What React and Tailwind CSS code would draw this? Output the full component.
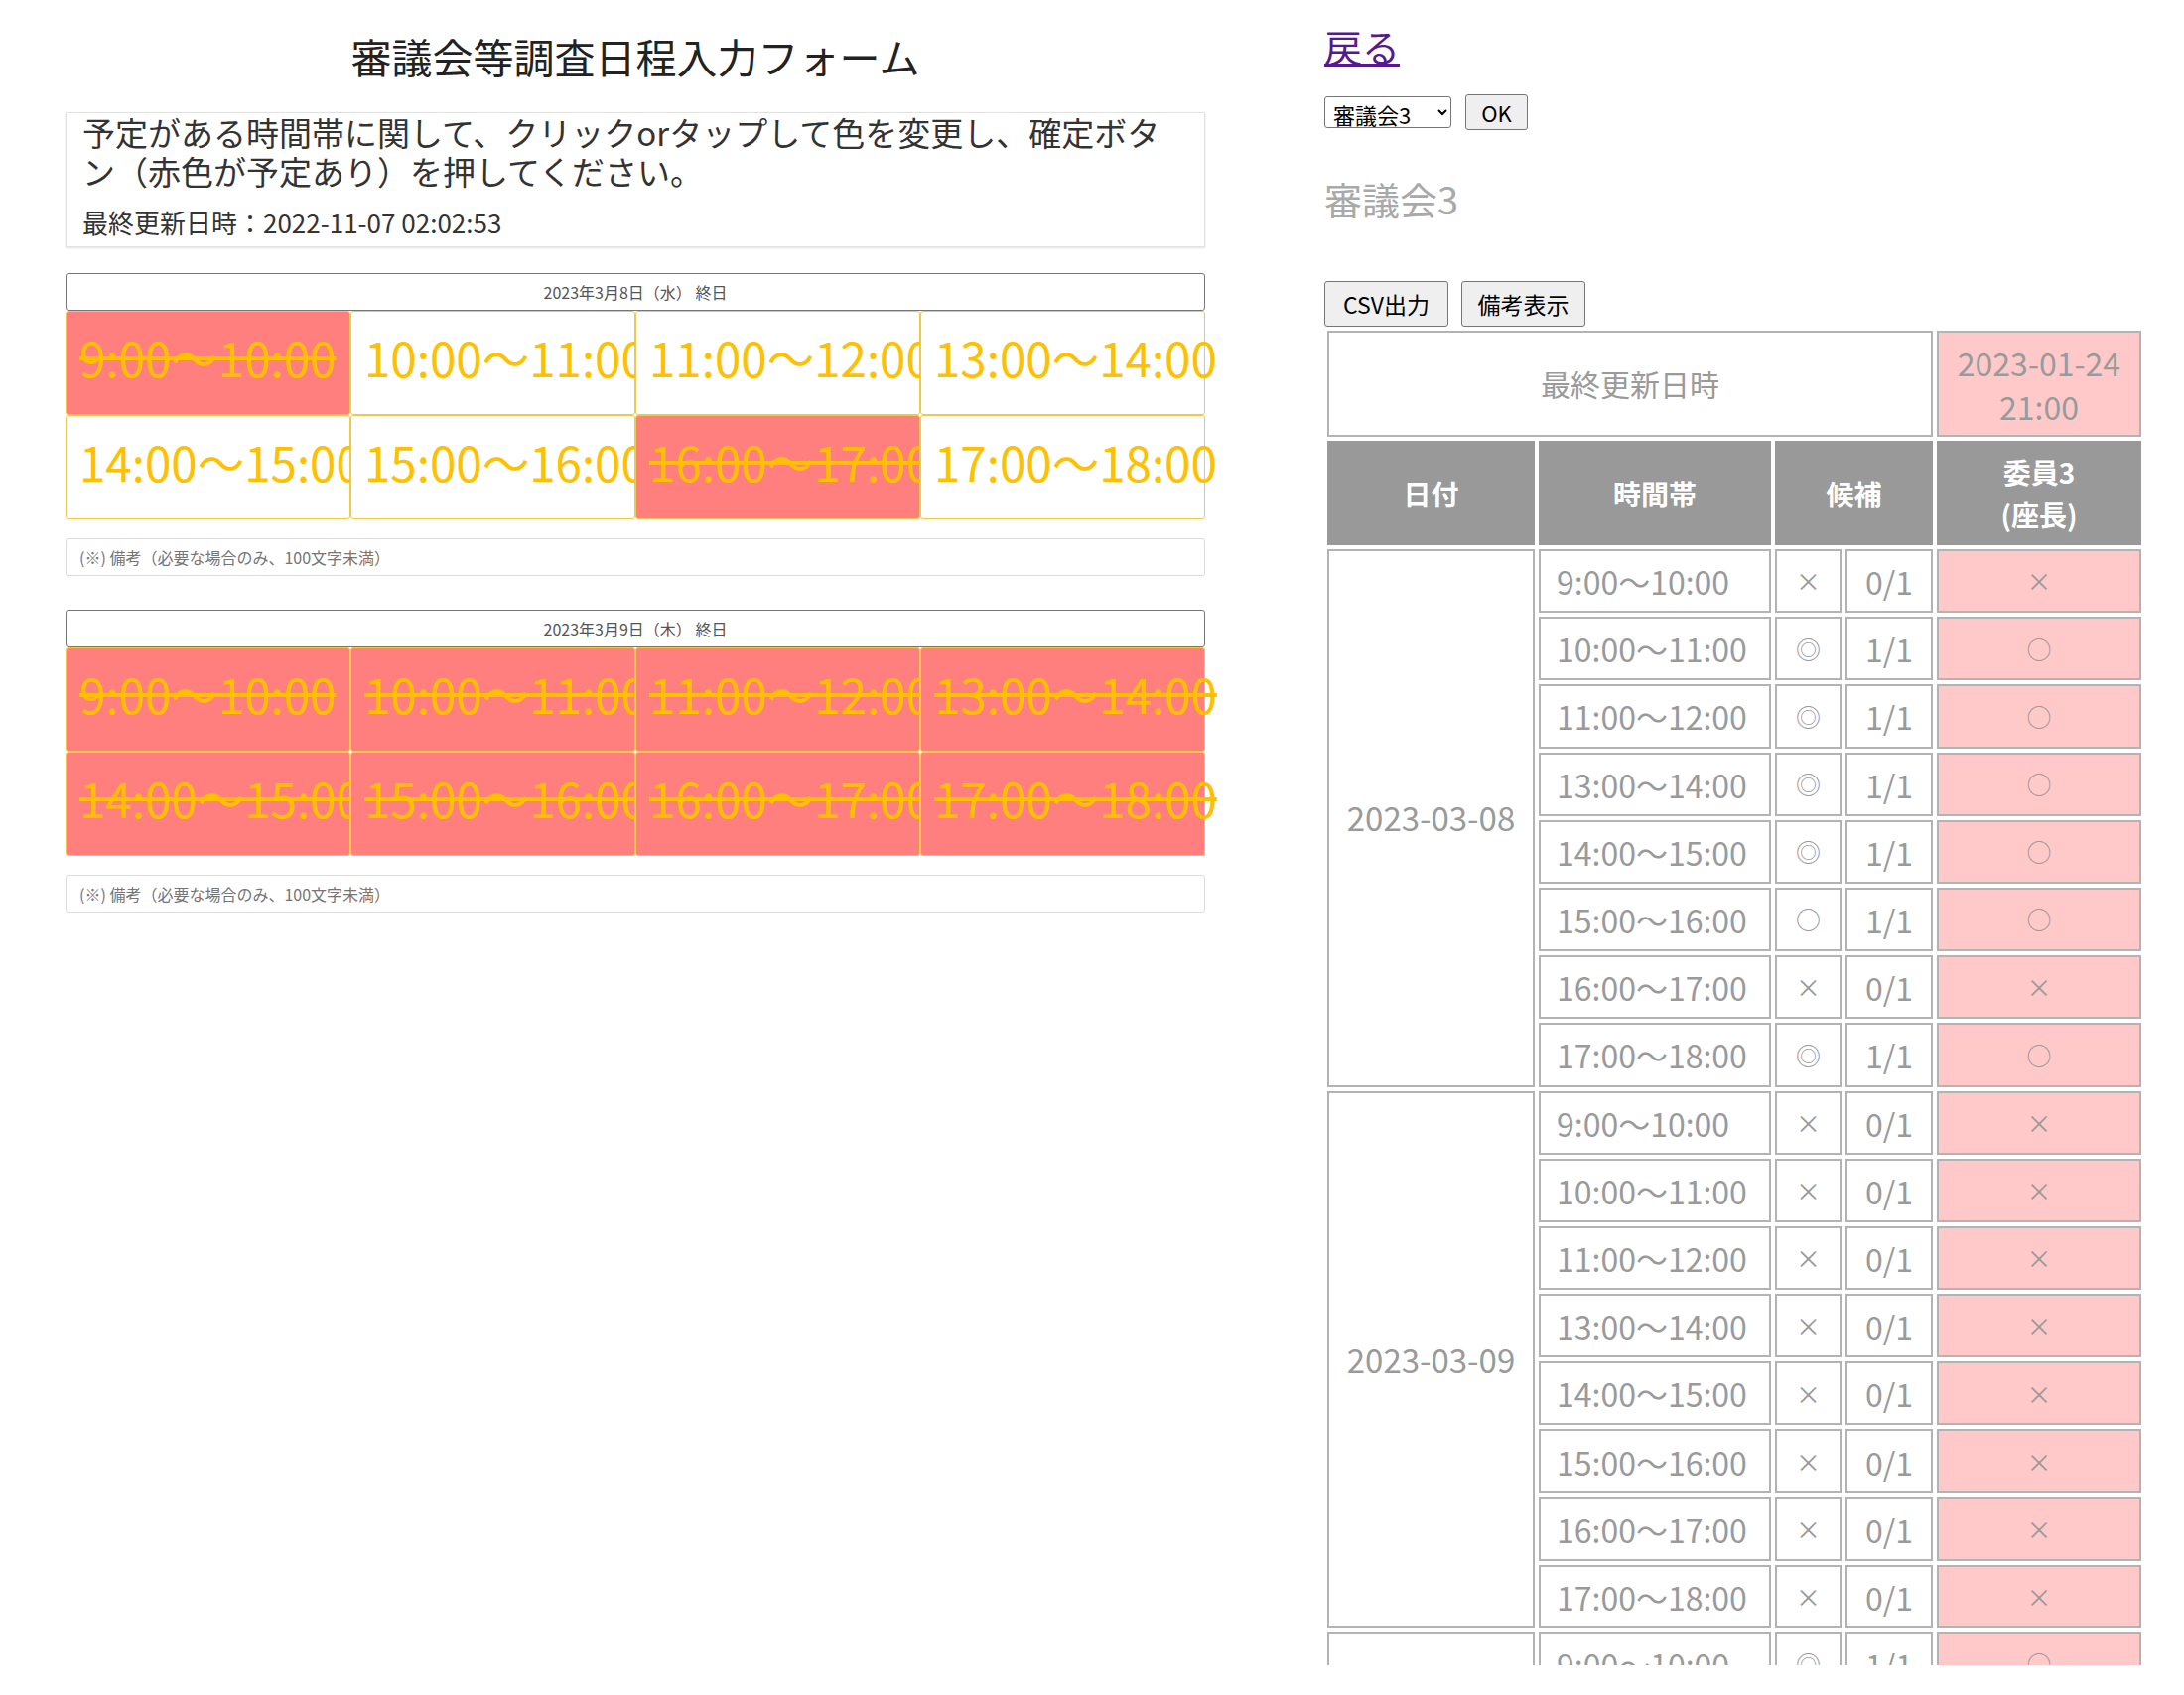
import React from "react";

const slots = ["9:00～10:00", "10:00～11:00", "11:00～12:00", "13:00～14:00", "14:00～15:00", "15:00～16:00", "16:00～17:00", "17:00～18:00"];

const day1Busy = [true, false, false, false, false, false, true, false];
const day2Busy = [true, true, true, true, true, true, true, true];

function TimeCell({ label, busy }) {
  return (
    <div
      className={
        busy
          ? "h-[105px] border border-[#f3c84a] rounded-[3px] bg-[#ff7f7f] flex items-center pl-[13px] pb-[12px] whitespace-nowrap text-[47.5px] leading-none text-[#ffc000] line-through"
          : "h-[105px] border border-[#f3c84a] rounded-[3px] bg-white flex items-center pl-[13px] pb-[12px] whitespace-nowrap text-[47.5px] leading-none text-[#ffc000]"
      }
    >
      {label}
    </div>
  );
}

function DayBlock({ title, busy, top }) {
  return (
    <div className={top}>
      <div className="h-[38px] border border-[#767676] rounded-[3px] bg-white flex items-center justify-center text-[16px] text-[#555]">
        {title}
      </div>
      <div className="grid grid-cols-4">
        {slots.map((s, i) => (
          <TimeCell key={s} label={s} busy={busy[i]} />
        ))}
      </div>
      <div className="mt-[19px] h-[38px] border border-[#dcdcdc] rounded-[3px] bg-white flex items-center pl-[13px] text-[16px] text-[#757575]">
        (※) 備考（必要な場合のみ、100文字未満）
      </div>
    </div>
  );
}

const group1 = [
  ["×", "0/1", "×"],
  ["◎", "1/1", "○"],
  ["◎", "1/1", "○"],
  ["◎", "1/1", "○"],
  ["◎", "1/1", "○"],
  ["○", "1/1", "○"],
  ["×", "0/1", "×"],
  ["◎", "1/1", "○"],
];
const group2 = slots.map(() => ["×", "0/1", "×"]);
const group3 = slots.map(() => ["◎", "1/1", "○"]);

function Group({ date, rows }) {
  return (
    <>
      {rows.map((r, i) => (
        <tr key={i}>
          {i === 0 && (
            <td rowSpan={8} className="border-2 border-[#b3b3b3] text-center align-middle text-[33px]">
              {date}
            </td>
          )}
          <td className="h-[64.2px] border-2 border-[#b3b3b3] pl-4 whitespace-nowrap text-[32px]">{slots[i]}</td>
          <td className="border-2 border-[#b3b3b3] text-center text-[25px]">{r[0]}</td>
          <td className="border-2 border-[#b3b3b3] text-center text-[32px]">{r[1]}</td>
          <td className="border-2 border-[#b3b3b3] bg-[#ffc9c9] text-center text-[25px]">{r[2]}</td>
        </tr>
      ))}
    </>
  );
}

export default function App() {
  return (
    <div className="flex w-[2200px] min-h-[1707px] bg-white font-['Noto_Sans_CJK_JP',sans-serif]">
      <div className="w-[1280px] shrink-0 px-[66px]">
        <h1 className="mt-[28px] text-center text-[41px] leading-[56px] text-[#222] font-normal">
          審議会等調査日程入力フォーム
        </h1>
        <div className="mt-[29px] h-[136px] border border-[#e2e2e2] shadow-[0_1px_2px_rgba(0,0,0,0.12)] bg-white px-[16px] text-[#333]">
          <div className="text-[33px] leading-[39px] whitespace-nowrap">
            予定がある時間帯に関して、クリックorタップして色を変更し、確定ボタ
          </div>
          <div className="text-[33px] leading-[39px] whitespace-nowrap">ン（赤色が予定あり）を押してください。</div>
          <div className="mt-[17px] text-[26px] leading-[30px] whitespace-nowrap">最終更新日時：2022-11-07 02:02:53</div>
        </div>
        <DayBlock top="mt-[26px]" title="2023年3月8日（水） 終日" busy={day1Busy} />
        <DayBlock top="mt-[34px]" title="2023年3月9日（木） 終日" busy={day2Busy} />
      </div>

      <div className="flex-1 pl-[54px] h-[1677px] overflow-hidden">
        <a href="#" className="block mt-[22px] w-fit text-[38px] leading-[48px] text-[#551a8b] underline">
          戻る
        </a>
        <div className="mt-[25px] flex items-center gap-[14px]">
          <select className="h-[32px] w-[128px] border border-[#767676] rounded-[3px] bg-white text-[22px] text-black px-[4px]">
            <option>審議会3</option>
          </select>
          <button className="h-[36px] w-[63px] border border-[#767676] rounded-[3px] bg-[#efefef] text-[22px] text-black">
            OK
          </button>
        </div>
        <div className="mt-[45px] text-[38px] leading-[48px] text-[#a9a9a9]">審議会3</div>
        <div className="mt-[59px] flex gap-[13px]">
          <button className="h-[46px] w-[125px] border border-[#767676] rounded-[3px] bg-[#efefef] text-[23px] text-black">
            CSV出力
          </button>
          <button className="h-[46px] w-[125px] border border-[#767676] rounded-[3px] bg-[#efefef] text-[23px] text-black">
            備考表示
          </button>
        </div>
        <table className="table-fixed border-separate border-spacing-1 w-[828px] text-[30px] text-[#9a9a9a] -ml-[1px]">
          <colgroup>
            <col className="w-[209px]" />
            <col className="w-[234px]" />
            <col className="w-[67px]" />
            <col className="w-[88px]" />
            <col className="w-[206px]" />
          </colgroup>
          <tbody>
            <tr>
              <td colSpan={4} className="h-[107px] border-2 border-[#b3b3b3] text-center">
                最終更新日時
              </td>
              <td className="border-2 border-[#b3b3b3] bg-[#ffc9c9] text-center text-[32px] leading-[44px]">
                2023-01-24
                <br />
                21:00
              </td>
            </tr>
            <tr>
              <th className="h-[105px] border-2 border-[#999] bg-[#999] text-white text-[28px] font-bold">日付</th>
              <th className="border-2 border-[#999] bg-[#999] text-white text-[28px] font-bold">時間帯</th>
              <th colSpan={2} className="border-2 border-[#999] bg-[#999] text-white text-[28px] font-bold">
                候補
              </th>
              <th className="border-2 border-[#999] bg-[#999] text-white text-[28px] font-bold leading-[43px]">
                委員3
                <br />
                (座長)
              </th>
            </tr>
            <Group date="2023-03-08" rows={group1} />
            <Group date="2023-03-09" rows={group2} />
            <Group date="2023-03-10" rows={group3} />
          </tbody>
        </table>
      </div>
    </div>
  );
}
